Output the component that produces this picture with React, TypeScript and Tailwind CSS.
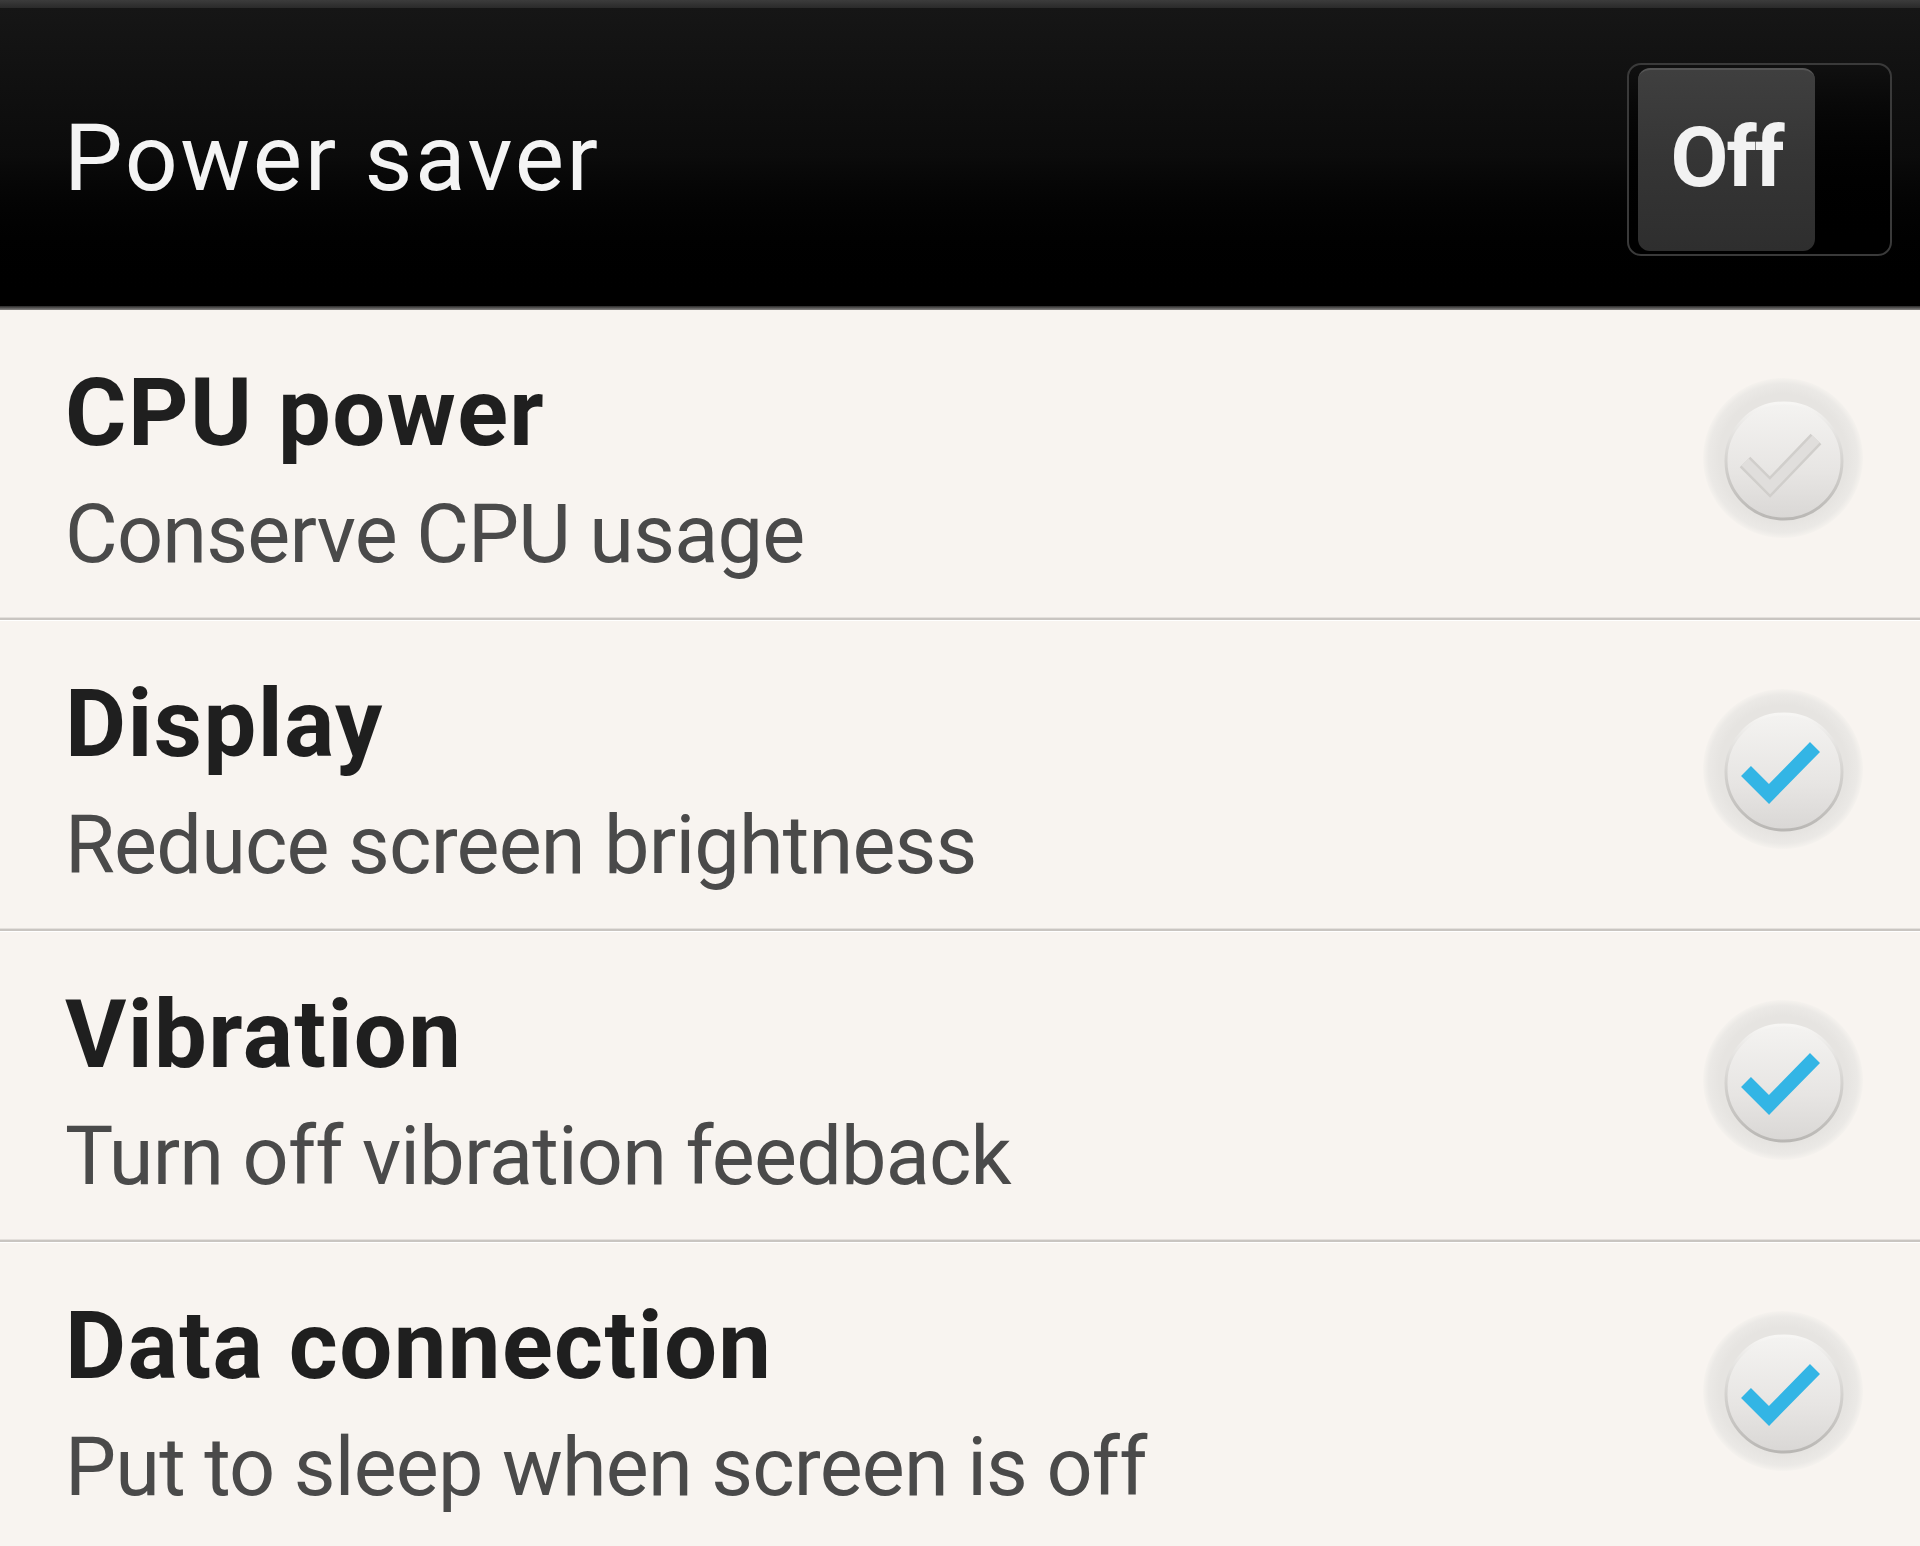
import React from "react";

const rows = [
  { title: "CPU power", sub: "Conserve CPU usage", checked: false },
  { title: "Display", sub: "Reduce screen brightness", checked: true },
  { title: "Vibration", sub: "Turn off vibration feedback", checked: true },
  { title: "Data connection", sub: "Put to sleep when screen is off", checked: true },
];

function Check({ checked, id }: { checked: boolean; id: string }) {
  return (
    <svg width="160" height="160" viewBox="0 0 160 160" className="block">
      <defs>
        <radialGradient id={`outer-${id}`} cx="50%" cy="50%" r="50%">
          <stop offset="80%" stopColor="#e6e4e1" />
          <stop offset="93%" stopColor="#ebe9e6" />
          <stop offset="100%" stopColor="#f5f2ee" />
        </radialGradient>
        <linearGradient id={`inner-${id}`} x1="0" y1="0" x2="0" y2="1">
          <stop offset="0%" stopColor="#f4f3f1" />
          <stop offset="60%" stopColor="#e7e5e3" />
          <stop offset="100%" stopColor="#d9d7d5" />
        </linearGradient>
        <linearGradient id={`rim-${id}`} x1="0" y1="0" x2="0" y2="1">
          <stop offset="0%" stopColor="#f7f6f4" />
          <stop offset="50%" stopColor="#d4d2cf" />
          <stop offset="100%" stopColor="#b9b7b4" />
        </linearGradient>
      </defs>
      <circle cx="80" cy="80" r="80" fill={`url(#outer-${id})`} />
      <circle cx="81" cy="83" r="58" fill={`url(#inner-${id})`} stroke={`url(#rim-${id})`} strokeWidth="3" />
      {checked ? (
        <polyline
          points="43,82 66,105 112,58"
          fill="none"
          stroke="#33b5e5"
          strokeWidth="14"
          strokeLinejoin="miter"
        />
      ) : (
        <>
          <polyline points="42,84 67,109 113,61" fill="none" stroke="#d0cecb" strokeWidth="15" strokeLinejoin="miter" />
          <polyline points="42,84 67,109 113,61" fill="none" stroke="#e0dedc" strokeWidth="10" strokeLinejoin="miter" />
        </>
      )}
    </svg>
  );
}

export default function App() {
  return (
    <div
      className="w-[1920px] h-[1546px] overflow-hidden bg-[#f8f4f0]"
      style={{ fontFamily: "Roboto, 'Noto Sans', sans-serif" }}
    >
      <div className="h-[310px] flex flex-col bg-black">
        <div className="h-[8px] bg-gradient-to-b from-[#3c3c3c] to-[#2a2a2a]" />
        <div className="flex-1 flex items-center justify-between pl-[64px] pr-[28px] bg-gradient-to-b from-[#161616] via-[#0b0b0b] to-black">
          <div className="text-[93px] leading-none text-[#f4f4f4] tracking-[2.6px] mt-[2px]">Power saver</div>
          <div className="w-[265px] h-[193px] rounded-[14px] border-2 border-[#3a3a3a] bg-gradient-to-b from-[#101010] to-black p-[3px] mt-[4px] flex">
            <div className="w-[177px] ml-[6px] h-full rounded-[12px] bg-gradient-to-b from-[#3f3f3f] via-[#353535] to-[#2e2e2e] border-t-2 border-[#555] flex items-center justify-center">
              <span className="text-[84px] font-bold leading-none text-[#f2f2f2] tracking-[-2px] -mt-[4px]">Off</span>
            </div>
          </div>
        </div>
        <div className="h-[4px] bg-gradient-to-b from-[#2a2a2a] to-[#8a8886]" />
      </div>
      {rows.map((r, i) => (
        <div key={i} className="flex flex-col">
          <div className="h-[307px] flex justify-between pl-[65px] pr-[57px]">
            <div className="flex flex-col pt-[48px]">
              <div className="text-[94px] font-bold leading-[110px] text-[#1f1f1f] whitespace-nowrap tracking-[1.4px]">{r.title}</div>
              <div className="mt-[19px] text-[81px] leading-[95px] text-[#4a4a4a] whitespace-nowrap tracking-[-0.8px]">{r.sub}</div>
            </div>
            <div className="pt-[68px]">
              <Check checked={r.checked} id={`c${i}`} />
            </div>
          </div>
          <div className="h-[1px] bg-[#e4e0dc]" />
          <div className="h-[2px] bg-[#c9c5c1]" />
          <div className="h-[1px] bg-white" />
        </div>
      ))}
    </div>
  );
}
